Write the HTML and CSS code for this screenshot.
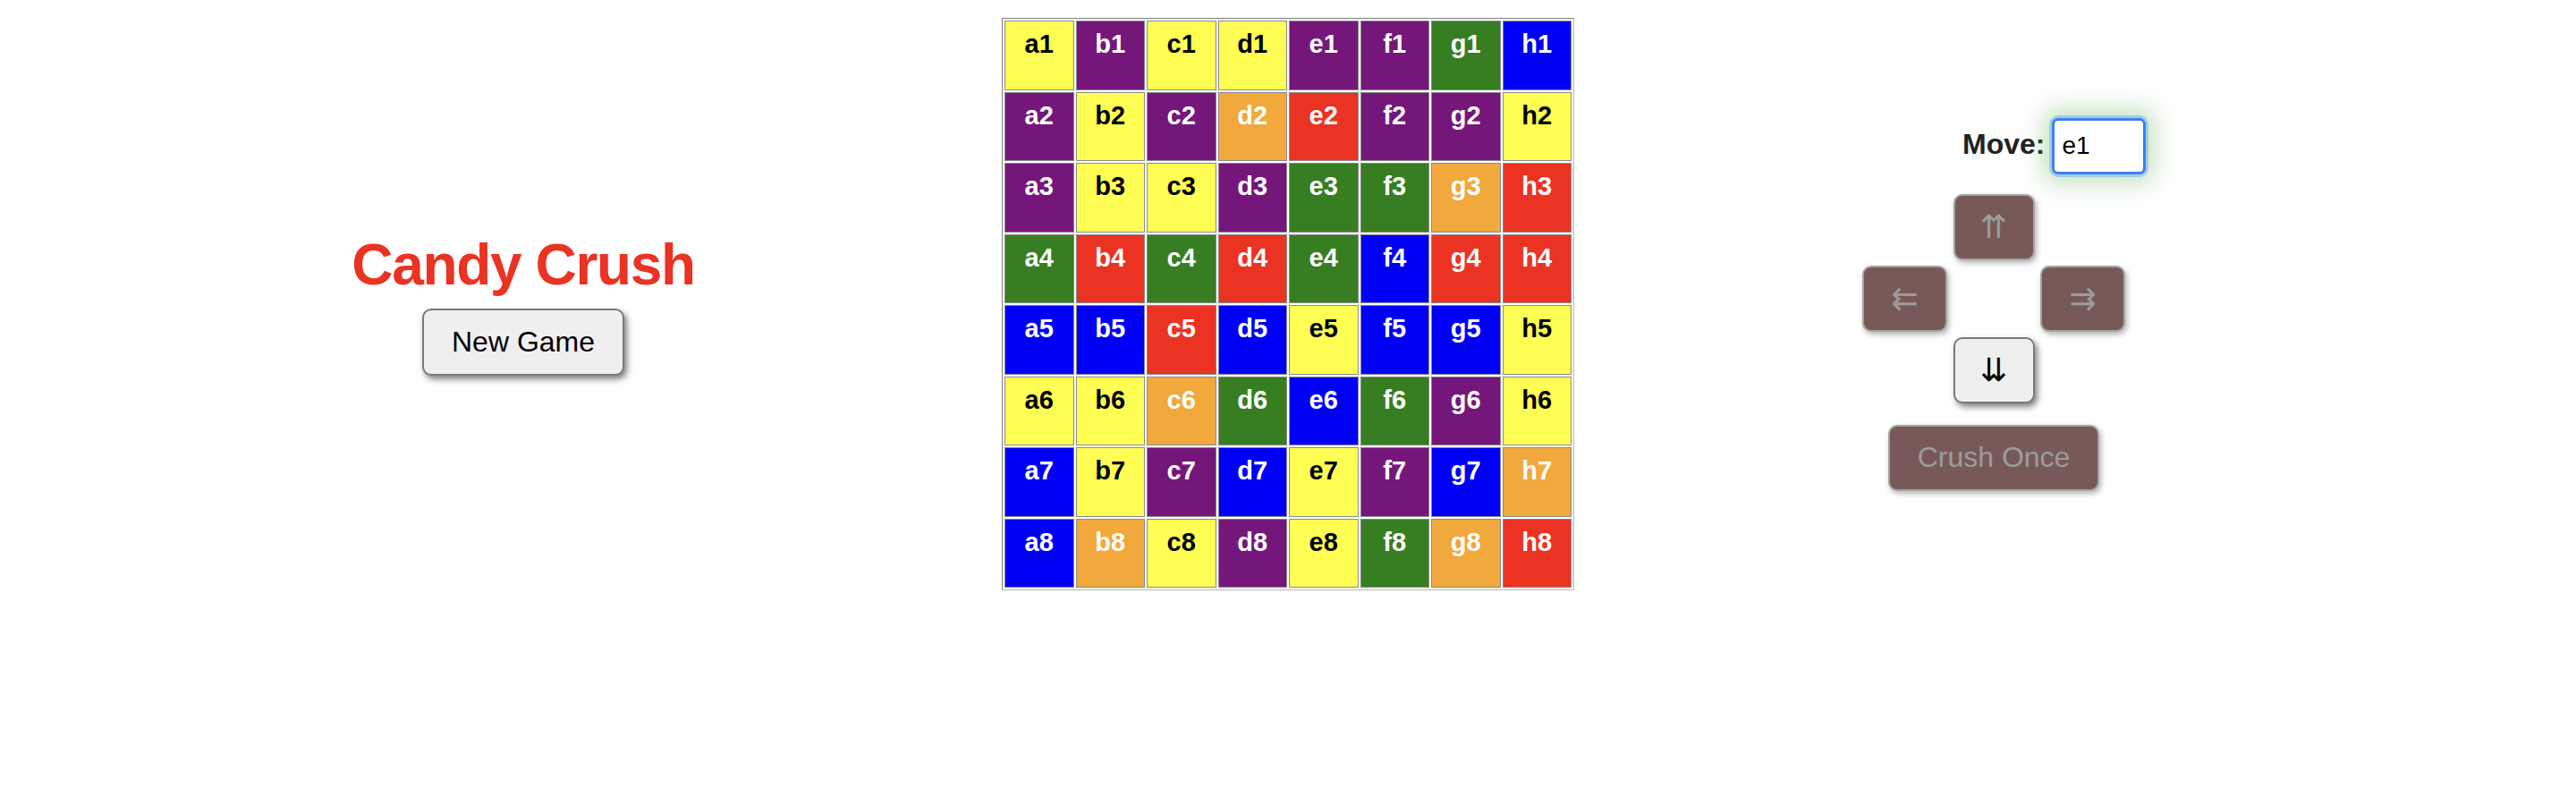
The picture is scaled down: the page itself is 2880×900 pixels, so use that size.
FILE: index.html
```html
<!DOCTYPE html>
<html lang="en">
<head>
<meta charset="utf-8">
<title>Candy Crush</title>
<link rel="stylesheet" href="styles.css">
</head>
<body>
<main class="page">
  <section class="intro">
    <h1 class="title">Candy Crush</h1>
    <button class="btn btn-light new-game">New Game</button>
  </section>

  <section class="board">
    <div class="cell yellow">a1</div><div class="cell purple">b1</div><div class="cell yellow">c1</div><div class="cell yellow">d1</div><div class="cell purple">e1</div><div class="cell purple">f1</div><div class="cell green">g1</div><div class="cell blue">h1</div>
    <div class="cell purple">a2</div><div class="cell yellow">b2</div><div class="cell purple">c2</div><div class="cell orange">d2</div><div class="cell red">e2</div><div class="cell purple">f2</div><div class="cell purple">g2</div><div class="cell yellow">h2</div>
    <div class="cell purple">a3</div><div class="cell yellow">b3</div><div class="cell yellow">c3</div><div class="cell purple">d3</div><div class="cell green">e3</div><div class="cell green">f3</div><div class="cell orange">g3</div><div class="cell red">h3</div>
    <div class="cell green">a4</div><div class="cell red">b4</div><div class="cell green">c4</div><div class="cell red">d4</div><div class="cell green">e4</div><div class="cell blue">f4</div><div class="cell red">g4</div><div class="cell red">h4</div>
    <div class="cell blue">a5</div><div class="cell blue">b5</div><div class="cell red">c5</div><div class="cell blue">d5</div><div class="cell yellow">e5</div><div class="cell blue">f5</div><div class="cell blue">g5</div><div class="cell yellow">h5</div>
    <div class="cell yellow">a6</div><div class="cell yellow">b6</div><div class="cell orange">c6</div><div class="cell green">d6</div><div class="cell blue">e6</div><div class="cell green">f6</div><div class="cell purple">g6</div><div class="cell yellow">h6</div>
    <div class="cell blue">a7</div><div class="cell yellow">b7</div><div class="cell purple">c7</div><div class="cell blue">d7</div><div class="cell yellow">e7</div><div class="cell purple">f7</div><div class="cell blue">g7</div><div class="cell orange">h7</div>
    <div class="cell blue">a8</div><div class="cell orange">b8</div><div class="cell yellow">c8</div><div class="cell purple">d8</div><div class="cell yellow">e8</div><div class="cell green">f8</div><div class="cell orange">g8</div><div class="cell red">h8</div>
  </section>

  <section class="controls">
    <div class="move-row">
      <label class="move-label" for="move">Move:</label>
      <input class="move-input" id="move" type="text" value="e1">
    </div>
    <div class="pad">
      <button class="btn btn-muted arrow up" disabled>&#x21C8;</button>
      <button class="btn btn-muted arrow left" disabled>&#x21C7;</button>
      <button class="btn btn-muted arrow right" disabled>&#x21C9;</button>
      <button class="btn btn-light arrow down">&#x21CA;</button>
    </div>
    <button class="btn btn-muted crush" disabled>Crush Once</button>
  </section>
</main>
</body>
</html>
```

FILE: styles.css
```css
html, body {
  margin: 0;
  padding: 0;
  background: #ffffff;
}

body {
  font-family: "Liberation Sans", Arial, Helvetica, sans-serif;
  color: #000;
}

.page {
  display: flex;
  align-items: center;
  padding: 20px 0;
}

/* ---------- left column ---------- */
.intro {
  width: 400px;
  margin-left: 385px;
  display: flex;
  flex-direction: column;
  align-items: center;
}

.title {
  margin: 0;
  font-size: 64px;
  line-height: 73.5px;
  font-weight: bold;
  letter-spacing: -1.35px;
  color: #ea3323;
  white-space: nowrap;
}

.btn {
  box-sizing: border-box;
  font-family: "Liberation Sans", Arial, sans-serif;
  font-size: 32px;
  border-radius: 10px;
  padding: 0 31px;
  height: 75px;
  white-space: nowrap;
  cursor: pointer;
}

.btn-light {
  background: #efefef;
  border: 2px solid #7a7a7a;
  color: #000;
  box-shadow: 3px 4px 7px rgba(0, 0, 0, 0.5);
}

.btn-muted {
  background: #775a58;
  border: 2px solid #a4a4a4;
  color: #9c9c9c;
  box-shadow: 2px 3px 6px rgba(0, 0, 0, 0.3);
}

.new-game {
  margin-top: 12px;
}

/* ---------- board ---------- */
.board {
  margin-left: 335px;
  display: grid;
  grid-template-columns: repeat(8, 77.5px);
  grid-auto-rows: 77.5px;
  gap: 2px;
  padding: 2px;
  border: 1px solid;
  border-color: #7d7d7d #b9b9b9 #b9b9b9 #7d7d7d;
}

.cell {
  box-sizing: border-box;
  border: 1px solid #8a8a8a;
  padding-top: 9px;
  font-size: 29px;
  font-weight: bold;
  text-align: center;
  color: #ffffff;
}

.yellow { background: #fffe54; color: #000; }
.purple { background: #75177a; }
.green  { background: #377e22; }
.blue   { background: #0000f5; }
.orange { background: #f1a83c; }
.red    { background: #ea3323; }

/* ---------- controls ---------- */
.controls {
  margin-left: 322px;
  width: 294px;
  display: flex;
  flex-direction: column;
  align-items: center;
}

.move-row {
  align-self: flex-start;
  margin-left: 112px;
  display: flex;
  align-items: baseline;
  gap: 8px;
}

.move-label {
  font-size: 32px;
  font-weight: bold;
  color: #222222;
}

.move-input {
  box-sizing: border-box;
  width: 105px;
  height: 63px;
  border: 3px solid #3d7ef6;
  border-radius: 7px;
  padding: 0 8px;
  font-family: "Liberation Sans", Arial, sans-serif;
  font-size: 28px;
  color: #000;
  outline: none;
  box-shadow: 0 0 0 3px #9fd0de, 0 0 26px 10px rgba(110, 180, 100, 0.4);
}

.pad {
  margin-top: 22px;
  display: grid;
  grid-template-columns: 95px 91px 95px;
  grid-template-rows: 74px 74px 74px;
  column-gap: 6.5px;
  row-gap: 6px;
}

.arrow {
  width: 100%;
  height: 100%;
  padding: 0;
  font-family: "DejaVu Sans", sans-serif;
  font-size: 36px;
  line-height: 1;
}

.up    { grid-column: 2; grid-row: 1; }
.left  { grid-column: 1; grid-row: 2; }
.right { grid-column: 3; grid-row: 2; }
.down  { grid-column: 2; grid-row: 3; }

.crush {
  margin-top: 24px;
  width: 236px;
  height: 74px;
  padding: 0;
}
```
